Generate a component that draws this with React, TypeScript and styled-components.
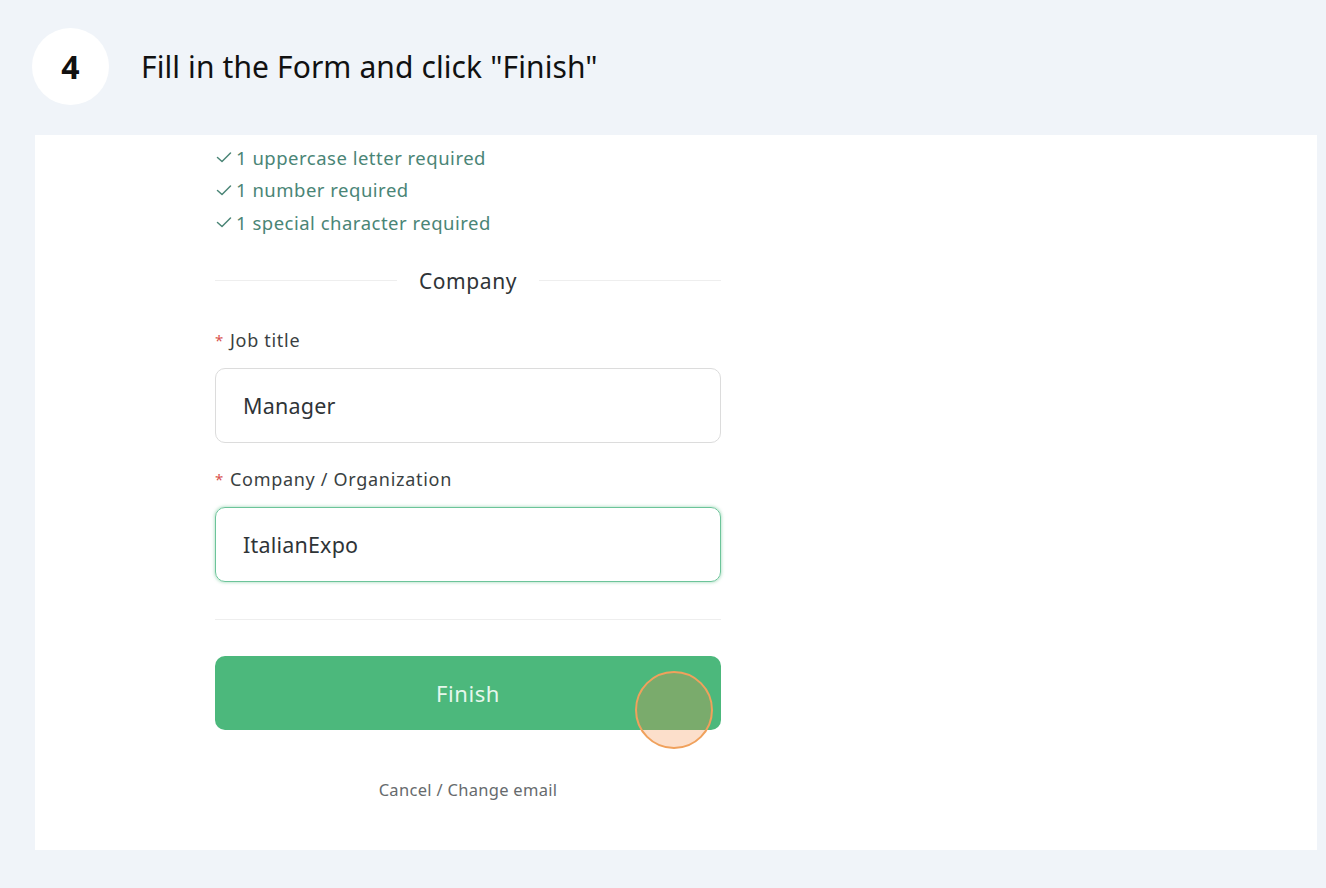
import React from 'react'
import styled, { createGlobalStyle } from 'styled-components'

const GlobalStyle = createGlobalStyle`
  html, body {
    margin: 0;
    padding: 0;
    background: #f0f4f9;
  }
  body {
    font-family: "Noto Sans", "Open Sans", sans-serif;
  }
`

const Page = styled.div`
  width: 1326px;
  height: 888px;
  display: flex;
  flex-direction: column;
  box-sizing: border-box;
  padding: 28px 9px 38px 35px;
`

const Header = styled.div`
  display: flex;
  align-items: center;
  gap: 32px;
  height: 77px;
  margin-left: -3px;
  margin-bottom: 30px;
`

const StepBadge = styled.div`
  width: 77px;
  height: 77px;
  border-radius: 50%;
  background: #ffffff;
  display: flex;
  align-items: center;
  justify-content: center;
  font-size: 32px;
  font-weight: 700;
  color: #111;
`

const StepTitle = styled.div`
  font-size: 30px;
  color: #111;
  letter-spacing: 0.1px;
`

const Panel = styled.div`
  flex: 1;
  background: #ffffff;
  padding: 6px 0 0 180px;
`

const Form = styled.div`
  width: 506px;
  display: flex;
  flex-direction: column;
`

const RuleList = styled.div`
  display: flex;
  flex-direction: column;
`

const Rule = styled.div`
  display: flex;
  align-items: center;
  gap: 3px;
  height: 32.5px;
  font-size: 18.5px;
  letter-spacing: 0.5px;
  color: #4a8576;
`

const Divider = styled.div`
  display: flex;
  align-items: center;
  gap: 22px;
  margin-top: 22px;
  height: 40px;
  font-size: 21px;
  letter-spacing: 0.6px;
  color: #2f3437;
  &::before,
  &::after {
    content: '';
    flex: 1;
    height: 1px;
    background: #eeeeee;
  }
`

const Label = styled.div<{ $top: number }>`
  margin-top: ${(p) => p.$top}px;
  font-size: 18px;
  letter-spacing: 0.7px;
  color: #3a3f42;
  height: 28px;
  line-height: 28px;
  display: flex;
  gap: 6px;
`

const Star = styled.span`
  color: #d9534f;
  font-size: 15px;
`

const Input = styled.div<{ $focused?: boolean }>`
  margin-top: 14px;
  height: 75px;
  box-sizing: border-box;
  border-radius: 10px;
  border: 1.5px solid ${(p) => (p.$focused ? '#6cc49a' : '#dcdcdc')};
  box-shadow: ${(p) => (p.$focused ? '0 0 3px 1px rgba(76, 184, 124, 0.35)' : 'none')};
  display: flex;
  align-items: center;
  padding-left: 27px;
  font-size: 21.5px;
  letter-spacing: 0.2px;
  color: #2f3437;
`

const Separator = styled.div`
  margin-top: 37px;
  height: 1px;
  background: #eeeeee;
`

const ButtonWrap = styled.div`
  position: relative;
  margin-top: 36px;
`

const FinishButton = styled.div`
  height: 74px;
  border-radius: 10px;
  background: #4cb87c;
  color: #e6f7ec;
  font-size: 22px;
  letter-spacing: 0.6px;
  display: flex;
  align-items: center;
  justify-content: center;
`

const ClickMarker = styled.div`
  position: absolute;
  left: 420px;
  top: 15px;
  width: 74px;
  height: 74px;
  border-radius: 50%;
  border: 2.5px solid #f0a15c;
  background: rgba(245, 140, 70, 0.28);
`

const CancelLink = styled.div`
  margin-top: 48px;
  text-align: center;
  font-size: 16.5px;
  letter-spacing: 0.3px;
  color: #666a6d;
`

const Check = () => (
  <svg width="18" height="18" viewBox="0 0 18 18" fill="none">
    <path d="M2.5 9.5 L7 13.5 L15.5 5" stroke="#4a8576" strokeWidth="1.5" strokeLinecap="round" strokeLinejoin="round" />
  </svg>
)

const rules = ['1 uppercase letter required', '1 number required', '1 special character required']

const App = () => {
  return (
    <>
      <GlobalStyle />
      <Page>
        <Header>
          <StepBadge>4</StepBadge>
          <StepTitle>Fill in the Form and click "Finish"</StepTitle>
        </Header>
        <Panel>
          <Form>
            <RuleList>
              {rules.map((r) => (
                <Rule key={r}>
                  <Check />
                  {r}
                </Rule>
              ))}
            </RuleList>

            <Divider>Company</Divider>

            <Label $top={25}>
              <Star>*</Star>Job title
            </Label>
            <Input>Manager</Input>

            <Label $top={22}>
              <Star>*</Star>Company / Organization
            </Label>
            <Input $focused>ItalianExpo</Input>

            <Separator />

            <ButtonWrap>
              <FinishButton>Finish</FinishButton>
              <ClickMarker />
            </ButtonWrap>

            <CancelLink>Cancel / Change email</CancelLink>
          </Form>
        </Panel>
      </Page>
    </>
  )
}

export default App
